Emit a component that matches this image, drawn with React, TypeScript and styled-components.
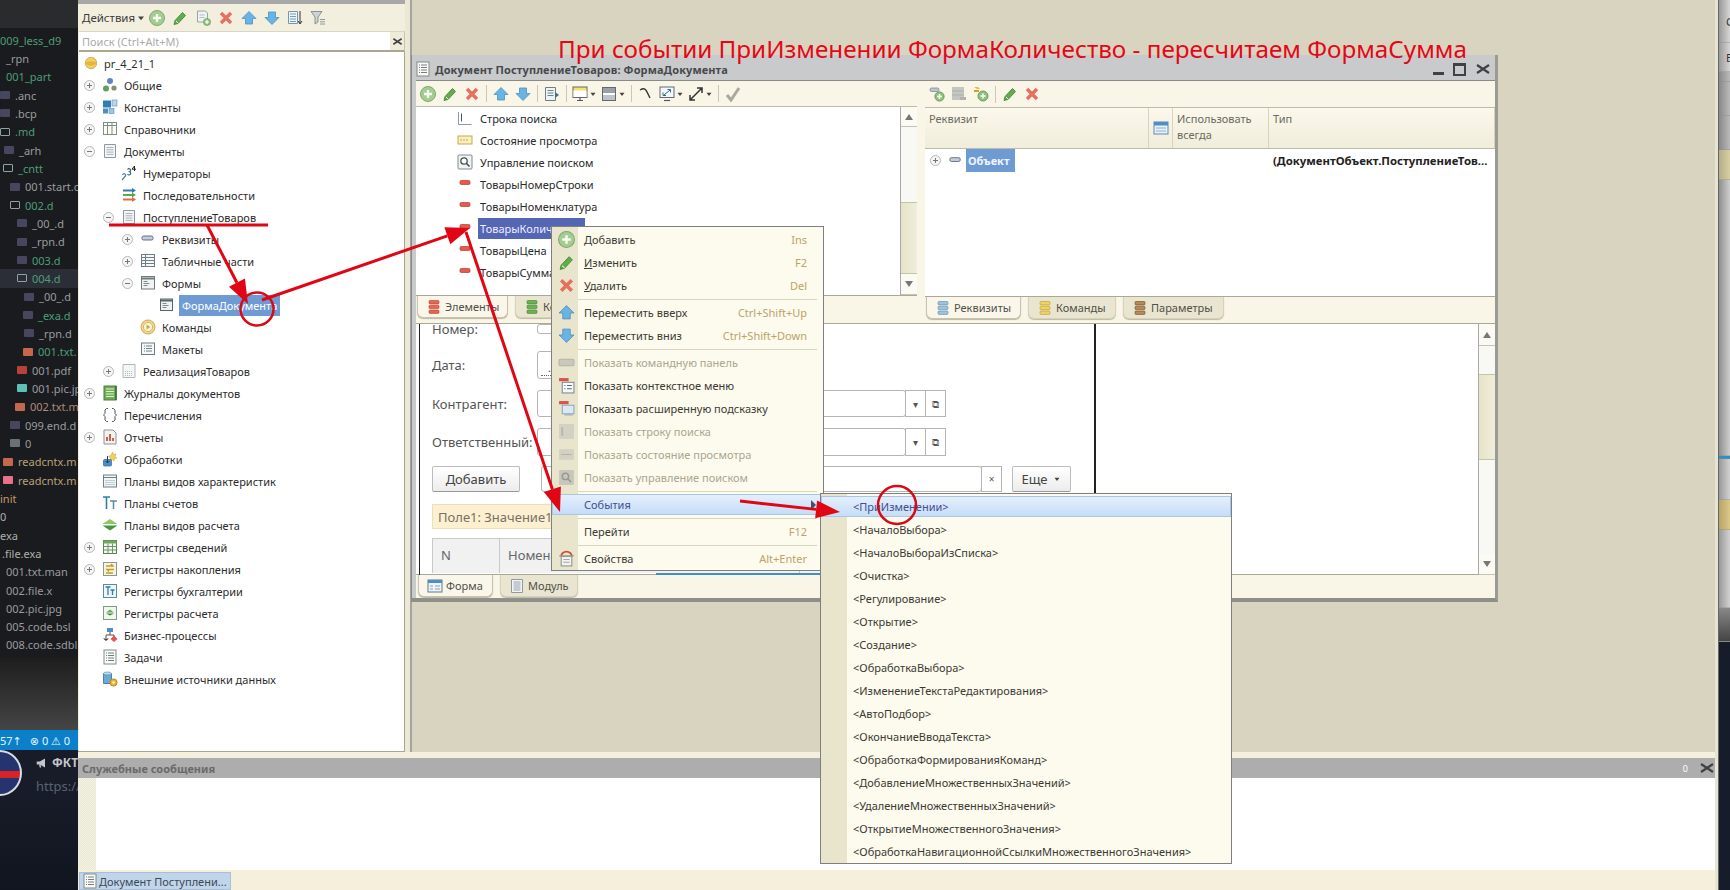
import React from "react";
import styled, { createGlobalStyle } from "styled-components";

const Global = createGlobalStyle`
  html, body { margin: 0; padding: 0; width: 1730px; height: 890px; overflow: hidden; background: #14181f; }
  * { box-sizing: border-box; }
  body { font-family: "Noto Sans", "DejaVu Sans", sans-serif; font-size: 11px; color: #2a2a2a; }
  #root { width: 1730px; height: 890px; }
`;

/* ---------- icons ---------- */
const Svg = styled.svg<{ $s?: number }>`
  width: ${(p) => p.$s ?? 16}px;
  height: ${(p) => p.$s ?? 16}px;
  flex: none;
  display: block;
`;

const bars = (c: string, d: string) => (
  <>
    <rect x="3" y="1.5" width="10" height="3.4" rx="1" fill={c} stroke={d} strokeWidth=".6" />
    <rect x="3" y="6.2" width="10" height="3.4" rx="1" fill={c} stroke={d} strokeWidth=".6" />
    <rect x="3" y="11" width="10" height="3.4" rx="1" fill={c} stroke={d} strokeWidth=".6" />
  </>
);

const page = (
  <path d="M2.5 1.5h11v13h-11z" fill="#f3f5f5" stroke="#8d9aa3" strokeWidth="1" />
);
const lines = (
  <path d="M4.5 4.5h7M4.5 6.8h7M4.5 9.1h7M4.5 11.4h7" stroke="#aab4bb" strokeWidth="1" />
);

const glyphs: Record<string, React.ReactNode> = {
  plus: (
    <>
      <circle cx="8" cy="8" r="7.5" fill="#a5cd92" stroke="#7fa873" />
      <path d="M8 4v8M4 8h8" stroke="#f5fbf0" strokeWidth="2.4" />
    </>
  ),
  pencil: (
    <>
      <path d="M10.5 2.5l3 3-7.5 8-4 1 1-4z" fill="#5fae4a" stroke="#3f7f33" strokeWidth=".8" />
      <path d="M4 11l2 2" stroke="#e8f4d8" strokeWidth="1" />
    </>
  ),
  cross: <path d="M3 3l10 10M13 3L3 13" stroke="#e76f60" strokeWidth="3.4" />,
  up: (
    <path
      d="M8 1.5L15 8.5H11.5V14H4.5V8.5H1z"
      fill="#69b4e4"
      stroke="#4f8fbf"
      strokeWidth=".8"
    />
  ),
  down: (
    <path
      d="M8 14.5L15 7.5H11.5V2H4.5V7.5H1z"
      fill="#69b4e4"
      stroke="#4f8fbf"
      strokeWidth=".8"
    />
  ),
  copy: (
    <>
      <path d="M2.5 1h8l2 2v9h-10z" fill="#eef2f2" stroke="#97a4ab" />
      <path d="M4.5 5h5M4.5 7.5h5" stroke="#b5bfc5" />
      <circle cx="12" cy="12" r="3.6" fill="#8fc17a" stroke="#6d9b5c" strokeWidth=".6" />
      <path d="M12 10v4M10 12h4" stroke="#fff" strokeWidth="1.2" />
    </>
  ),
  listdown: (
    <>
      <path d="M1.5 1.5h9v12h-9z" fill="#eef4f8" stroke="#7f95a3" />
      <path d="M3 4h6M3 6.5h6M3 9h6M3 11.5h6" stroke="#6f9dbf" />
      <path d="M13 1v12M11 11l2 3 2-3" stroke="#333" strokeWidth="1" fill="none" />
    </>
  ),
  filter: (
    <>
      <path d="M1 1.5h11L8 7v5l-3 2V7z" fill="#cfd4d2" stroke="#7d8a8d" strokeWidth=".9" />
      <path d="M10 9.5h5M10 11.8h5M10 14h5" stroke="#8f9a9c" />
    </>
  ),
  caret: <path d="M4 6h8l-4 5z" fill="#444" />,
  root: (
    <>
      <circle cx="8" cy="8" r="6.5" fill="#f3cf5e" stroke="#c9a94c" />
      <path d="M2 8a6 3 0 0012 0 6 2 0 00-12 0z" fill="#e4b63f" />
    </>
  ),
  common: (
    <>
      <circle cx="8" cy="4" r="3" fill="#5f83c4" />
      <circle cx="4" cy="11.5" r="3" fill="#5ea15b" />
      <circle cx="12" cy="11" r="2.6" fill="#8c8c72" />
    </>
  ),
  constants: (
    <>
      <rect x="1" y="1.5" width="8" height="7" fill="#2f7fb5" />
      <rect x="10" y="1" width="5" height="6" fill="#bcd6e8" stroke="#4f8fbf" strokeWidth=".6" />
      <rect x="1" y="9.5" width="5" height="5" fill="#4f8fbf" />
      <rect x="7" y="9.5" width="5" height="5" fill="#9fc4dd" stroke="#4f8fbf" strokeWidth=".6" />
    </>
  ),
  catalog: (
    <>
      <rect x="1.5" y="1.5" width="13" height="12" fill="#fdfcf3" stroke="#7f8d8d" />
      <path d="M1.5 4.5h13M5.5 1.5v12M10 1.5v12" stroke="#7f8d8d" />
    </>
  ),
  doc: (
    <>
      {page}
      {lines}
    </>
  ),
  docgrid: (
    <>
      <path d="M2 1.5h12v13H2z" fill="#f5f6f6" stroke="#b0b8bc" />
      <path d="M4 8.5h8M4 10.5h8M4 12.5h8" stroke="#b3bcc2" strokeDasharray="1 1" />
    </>
  ),
  numerator: (
    <>
      <path d="M1 15l3.5-4a1.6 1.6 0 10-3-1" fill="none" stroke="#4a7fa8" strokeWidth="1.2" />
      <path d="M6.5 4.5a1.6 1.6 0 112 2.2 1.7 1.7 0 11-2 2.4" fill="none" stroke="#2d5f85" strokeWidth="1.1" />
      <path d="M13.5 6V1L11 4.2h4" fill="none" stroke="#222" strokeWidth="1" />
    </>
  ),
  seq: (
    <>
      <path d="M2 3.5h10" stroke="#2d7cb5" strokeWidth="2" />
      <path d="M11 1l4 2.5-4 2.5z" fill="#2d7cb5" />
      <path d="M2 8h10" stroke="#5aa845" strokeWidth="2" />
      <path d="M11 5.5l4 2.5-4 2.5z" fill="#5aa845" />
      <path d="M2 12.5h10" stroke="#de6a4a" strokeWidth="2" />
      <path d="M11 10l4 2.5-4 2.5z" fill="#de6a4a" />
    </>
  ),
  attr: <rect x="2" y="5" width="11" height="4" rx="1.5" fill="#c6ccd8" stroke="#5f6f8c" />,
  attrRed: <rect x="3" y="4.5" width="10" height="4" rx="1.2" fill="#e9574d" stroke="#b53c34" strokeWidth=".7" />,
  table: (
    <>
      <rect x="1.5" y="1.5" width="13" height="12" fill="#f6f8f8" stroke="#6f7f88" />
      <path d="M1.5 4.5h13M1.5 7.5h13M1.5 10.5h13M5.5 1.5v12" stroke="#6f7f88" />
    </>
  ),
  forms: (
    <>
      <rect x="1.5" y="1.5" width="13" height="12.5" fill="#f3f4f2" stroke="#6f7a7c" />
      <path d="M1.5 3.5h13" stroke="#6f7a7c" strokeWidth="2" />
      <path d="M3.5 6.5h4M3.5 8.5h6M3.5 10.5h4" stroke="#7f8a8c" />
    </>
  ),
  form: (
    <>
      <rect x="1.5" y="2" width="12" height="11.5" fill="#eef1f2" stroke="#59656a" />
      <path d="M1.5 3.5h12" stroke="#59656a" strokeWidth="2" />
      <path d="M3.5 6.5h4M3.5 8.5h6M3.5 10.5h4" stroke="#7f8a8c" />
    </>
  ),
  cmd: (
    <>
      <circle cx="8" cy="8" r="7" fill="#f4d98a" stroke="#c7a955" />
      <circle cx="8" cy="8" r="4.6" fill="#fdf6d8" stroke="#d5b968" />
      <path d="M6.5 5.5l4 2.5-4 2.5z" fill="#d0a94a" />
    </>
  ),
  layout: (
    <>
      <rect x="1.5" y="2" width="13" height="11.5" fill="#f4f7f8" stroke="#6f8088" />
      <path d="M4 5h1M6 5h6M4 7.5h1M6 7.5h6M4 10h1M6 10h6" stroke="#6f8088" />
    </>
  ),
  journal: (
    <>
      <rect x="2" y="1" width="12" height="14" fill="#6fae55" stroke="#467f3c" />
      <path d="M4 4h8M4 6.5h8M4 9h8M4 11.5h8" stroke="#dff0cd" />
      <path d="M14 1v14" stroke="#2f6a2c" strokeWidth="1.4" />
    </>
  ),
  enum: (
    <path
      d="M6 1.5H4.5L3 3v3.5L1.5 8 3 9.5V13l1.5 1.5H6M10 1.5h1.5L13 3v3.5L14.5 8 13 9.5V13l-1.5 1.5H10"
      fill="none"
      stroke="#4a5560"
      strokeWidth="1"
    />
  ),
  report: (
    <>
      <path d="M2 1h9l3 3v11H2z" fill="#f4f2ee" stroke="#8d949a" />
      <path d="M5 12V8M8 12V5M11 12V9" stroke="#c0533f" strokeWidth="1.8" />
    </>
  ),
  proc: (
    <>
      <path d="M10.5 1l1 2.4 2.5-.4-1 2.4 1.9 1.6-2.5.5L12 10l-1.8-1.8L8 9.5l.4-2.7L6.5 5.2l2.5-.6z" fill="#f4d35c" stroke="#cda83c" strokeWidth=".6" />
      <rect x="1.5" y="8.5" width="8" height="6.5" rx="1" fill="#4e8fc9" stroke="#2f6a9f" strokeWidth=".7" />
      <path d="M5.5 5v7M3.5 10l2 2 2-2" stroke="#1e3f5e" fill="none" />
    </>
  ),
  pvh: (
    <>
      <rect x="1.5" y="2" width="13" height="12" fill="#f0f4f5" stroke="#6f8088" />
      <path d="M1.5 4.5h13" stroke="#6f8088" />
      <path d="M4 7v5M6 7v5M8 7v5M10 7v5M12 7v5" stroke="#96a9b3" strokeDasharray="1 1" />
    </>
  ),
  accounts: (
    <>
      <path d="M1 2h7M4.5 2v12" stroke="#2d7fa8" strokeWidth="1.6" />
      <path d="M8 6h7M11.5 6v8" stroke="#5a8a9f" strokeWidth="1.5" />
    </>
  ),
  calc: (
    <>
      <path d="M8 2l7.5 5H.5z" fill="#8fc66a" />
      <path d="M.5 8.5h15L8 13.5z" fill="#3f9a35" />
    </>
  ),
  regInfo: (
    <>
      <rect x="1.5" y="1.5" width="13" height="13" fill="#f2f6ee" stroke="#5f7f5a" />
      <path d="M1.5 1.5h13v3h-13z" fill="#6fa85f" />
      <path d="M1.5 7.5h13M1.5 11h13M6 4.5v10M10.5 4.5v10" stroke="#6f9466" />
    </>
  ),
  regAcc: (
    <>
      <rect x="1.5" y="1.5" width="13" height="13" fill="#f6f4e2" stroke="#8d9a8a" />
      <path d="M4 5h7l-2-2M12 8.5H5l2 2M4 12h7" stroke="#c99a1e" strokeWidth="1.4" fill="none" />
    </>
  ),
  regBuh: (
    <>
      <rect x="1.5" y="1.5" width="13" height="13" fill="#eef6f8" stroke="#5f8a9a" />
      <path d="M3.5 4h5M6 4v8M8.5 7h4M10.5 7v5" stroke="#2d7fa8" strokeWidth="1.3" />
    </>
  ),
  regCalc: (
    <>
      <rect x="1.5" y="1.5" width="13" height="13" fill="#f2f6ee" stroke="#7f9a8a" />
      <path d="M8 4.5l4 3H4z" fill="#6fa85f" />
      <path d="M4 8.5h8l-4 2z" fill="#2f8a35" />
    </>
  ),
  bp: (
    <>
      <rect x="5" y="1" width="6" height="4" fill="#4e8fc9" />
      <path d="M8 5v3M4 8h8M4 8v3M12 8v2" stroke="#555" />
      <path d="M1 11.5h6l-3 2.5z" fill="#444" />
      <path d="M12 8.5l3.5 3.5-3.5 3-3.5-3z" fill="#e0554d" />
    </>
  ),
  tasks: (
    <>
      <rect x="2" y="1" width="12" height="14" fill="#fbfbf4" stroke="#7f8d8d" />
      <path d="M4 4h1M6 4h6M4 6.5h1M6 6.5h6M4 9h1M6 9h6M4 11.5h1M6 11.5h6" stroke="#6f7f88" />
    </>
  ),
  ext: (
    <>
      <path d="M1.5 2.5h8v10h-8z" fill="#6da9d6" stroke="#4a80aa" />
      <ellipse cx="5.5" cy="2.5" rx="4" ry="1.5" fill="#bcd9ee" stroke="#4a80aa" strokeWidth=".6" />
      <circle cx="11.5" cy="11.5" r="3.6" fill="#e8b33f" stroke="#b98a25" />
      <circle cx="11.5" cy="11.5" r="1.2" fill="#fff4d0" />
    </>
  ),
  searchstr: (
    <>
      <path d="M1.5 2v12.5h13" fill="none" stroke="#8d9aa3" />
      <path d="M4.5 3.5v8" stroke="#4a5560" />
    </>
  ),
  state: (
    <>
      <rect x="1" y="4" width="14" height="8" fill="#fbefc0" stroke="#c5a94f" />
      <path d="M3 8h9" stroke="#c5a94f" strokeDasharray="2 1" />
    </>
  ),
  searchctl: (
    <>
      <rect x="1" y="1" width="14" height="14" rx="1" fill="#f2f4f4" stroke="#7f8d8d" />
      <circle cx="7" cy="7" r="3.2" fill="#fff" stroke="#47535c" strokeWidth="1.3" />
      <path d="M9.5 9.5l3 3" stroke="#47535c" strokeWidth="1.6" />
    </>
  ),
  run: (
    <>
      <path d="M1.5 1.5h10v13h-10z" fill="#eef3f4" stroke="#6f8088" />
      <path d="M3.5 4.5h6M3.5 7h6M3.5 9.5h6" stroke="#6f8088" />
      <path d="M11 6l4 3-4 3z" fill="#3f6d8d" />
    </>
  ),
  screenY: (
    <>
      <rect x="1" y="1" width="14" height="10.5" fill="#f7e26a" stroke="#667" />
      <rect x="1.5" y="4.5" width="13" height="6.5" fill="#fff" />
      <path d="M5 14.5h6M8 11.5v3" stroke="#556" strokeWidth="1.2" />
    </>
  ),
  panels: (
    <>
      <rect x="1.5" y="1.5" width="13" height="13" fill="#fff" stroke="#667" />
      <rect x="2" y="2" width="12" height="5" fill="#9aa2a8" />
      <rect x="2" y="9" width="12" height="5" fill="#bdc3c8" />
    </>
  ),
  bend: <path d="M2 4c5-3 6 0 7 2s2 4 3 6" fill="none" stroke="#333" strokeWidth="1.4" />,
  fit: (
    <>
      <rect x="1" y="1" width="14" height="10.5" fill="#f2f7fa" stroke="#667" />
      <path d="M5 9l6-5M8.5 3.5h3v3M4 6.5v3h3" stroke="#2d6a8f" fill="none" />
      <path d="M5 14.5h6" stroke="#556" strokeWidth="1.2" />
    </>
  ),
  diag: <path d="M2 14L14 2M9 2h5v5M2 9v5h5" fill="none" stroke="#333" strokeWidth="1.5" />,
  check: <path d="M2 9l4 5 8-12" fill="none" stroke="#a9a9a0" strokeWidth="3" />,
  addAttr: (
    <>
      <rect x="1" y="2" width="9" height="3.5" rx="1.5" fill="#bdc6c6" stroke="#6f8088" strokeWidth=".7" />
      <circle cx="10.5" cy="10.5" r="4.6" fill="#8fc17a" stroke="#6d9b5c" />
      <path d="M10.5 8v5M8 10.5h5" stroke="#fff" strokeWidth="1.5" />
    </>
  ),
  addGray: (
    <>
      <rect x="1" y="1" width="12" height="13" fill="#c4c6c2" />
      <path d="M1 5h12M1 9h12" stroke="#aeb0ac" />
      <rect x="9" y="11" width="6" height="3" fill="#b0b2ae" />
    </>
  ),
  addCmd: (
    <>
      <path d="M1 1h4l2 2H4z" fill="#e3b93c" />
      <path d="M1 5h5" stroke="#d49f24" strokeWidth="2" />
      <circle cx="10" cy="10" r="5" fill="#8fc17a" stroke="#6d9b5c" />
      <path d="M10 7.5v5M7.5 10h5" stroke="#fff" strokeWidth="1.5" />
    </>
  ),
  grayCmd: <rect x="1" y="5" width="14" height="6" rx="1" fill="#c9c8bb" stroke="#b5b4a6" />,
  ctxMenu: (
    <>
      <rect x="1" y="1" width="9" height="3" fill="#d9534a" />
      <rect x="4" y="5" width="11" height="10" fill="#f7f9fa" stroke="#7f8d8d" />
      <path d="M6 8h1M8.5 8h4.5M6 11h1M8.5 11h4.5" stroke="#4a6a8a" />
    </>
  ),
  hint: (
    <>
      <rect x="1" y="1" width="9" height="3" fill="#d9534a" />
      <path d="M4 5h11v8H4z" fill="#dbe9f3" stroke="#8fa7ba" />
      <path d="M6 14h8" stroke="#8fa7ba" />
    </>
  ),
  graySearch: (
    <>
      <rect x="1" y="1" width="14" height="14" fill="#d2d1c4" />
      <path d="M4 4v8" stroke="#b4b3a5" strokeWidth="1.5" />
    </>
  ),
  grayState: (
    <>
      <rect x="1" y="3" width="14" height="10" fill="#d2d1c4" />
      <path d="M3 8h10" stroke="#b4b3a5" />
    </>
  ),
  grayCtl: (
    <>
      <rect x="1" y="1" width="14" height="14" rx="1" fill="#c7c7bd" />
      <circle cx="7" cy="7" r="3" fill="none" stroke="#9a9a90" strokeWidth="1.4" />
      <path d="M9.3 9.3l3 3" stroke="#9a9a90" strokeWidth="1.5" />
    </>
  ),
  props: (
    <>
      <path d="M3 6a5 4.5 0 0110 0" fill="none" stroke="#c9503f" strokeWidth="1.6" />
      <path d="M1 5.5h14" stroke="#9a9a90" />
      <rect x="3" y="6" width="10" height="9" fill="#f3f3ec" stroke="#8d949a" />
      <path d="M5 9h6M5 11.5h6" stroke="#a0a8ae" />
    </>
  ),
  tabRed: bars("#e8664f", "#b5402e"),
  tabGreen: bars("#6cb24f", "#417f30"),
  tabBlue: bars("#9ec3e0", "#5f88a8"),
  tabYellow: bars("#f0d35c", "#b79a30"),
  tabBrown: bars("#b98a55", "#6a4a25"),
  tabForm: (
    <>
      <rect x="1" y="2" width="14" height="12" fill="#eef4f8" stroke="#5a7a92" />
      <rect x="1" y="2" width="14" height="3" fill="#4e8fc9" />
      <path d="M3 8h3M8 8h5M3 11h3M8 11h5" stroke="#8aa2b3" />
    </>
  ),
  tabModule: (
    <>
      {page}
      <path d="M4.5 4h7M4.5 6h7M4.5 8h7M4.5 10h7M4.5 12h7" stroke="#94a3ad" />
    </>
  ),
  msgCross: <path d="M2 4l12 8M14 4L2 12" stroke="#3f4245" strokeWidth="2.2" />,
  mega: (
    <>
      <path d="M1 6h4l7-4v12l-7-4H1z" fill="#c4c6c9" />
      <path d="M4 10l1 4h2l-1-4z" fill="#c4c6c9" />
    </>
  ),
  calendarHead: (
    <>
      <rect x="1" y="2" width="14" height="12" fill="#e6f1f8" stroke="#5f8ab0" />
      <rect x="1" y="2" width="14" height="3.5" fill="#4e8fc9" />
      <path d="M3 8h10M3 11h10" stroke="#8fb2cc" />
    </>
  ),
};

const Icon = ({ n, s }: { n: string; s?: number }) => (
  <Svg $s={s} viewBox="0 0 16 16">
    {glyphs[n]}
  </Svg>
);

/* ---------- page frame ---------- */
const Page = styled.div`
  position: relative;
  display: flex;
  width: 1730px;
  height: 890px;
  overflow: hidden;
`;

/* ---------- dark editor side panel ---------- */
const Side = styled.aside`
  width: 78px;
  flex: none;
  display: flex;
  flex-direction: column;
  background: #161a25;
  overflow: hidden;
`;
const SideHead = styled.div`
  height: 28px;
  flex: none;
  background: #2a2b2d;
`;
const SideList = styled.div`
  height: 629px;
  flex: none;
  padding-top: 3px;
  background: #191b1e;
  overflow: hidden;
`;
const SideRow = styled.div<{ $pad: number; $sel?: boolean; $color: string }>`
  display: flex;
  align-items: center;
  gap: 5px;
  height: 18.33px;
  padding-left: ${(p) => p.$pad}px;
  background: ${(p) => (p.$sel ? "#2b2e36" : "transparent")};
  color: ${(p) => p.$color};
  font-size: 11px;
  white-space: nowrap;
`;
const FolderSolid = styled.span<{ $c?: string }>`
  width: 10px;
  height: 8px;
  flex: none;
  border-radius: 1px;
  background: ${(p) => p.$c ?? "#46465f"};
`;
const FolderLine = styled.span`
  width: 10px;
  height: 8px;
  flex: none;
  border: 1.5px solid #8fa59a;
  border-radius: 1px;
`;
const SideFade = styled.div`
  height: 73px;
  flex: none;
  background: linear-gradient(#1d1d1d, #454545);
`;
const StatusBar = styled.div`
  height: 20px;
  flex: none;
  display: flex;
  align-items: center;
  gap: 8px;
  background: #0a80cb;
  color: #e6f3fb;
  font-size: 11px;
  white-space: nowrap;
`;
const Chat = styled.div`
  flex: 1;
  display: flex;
  gap: 14px;
  background: linear-gradient(#171c28 40px, #10151f);
`;
const Avatar = styled.div`
  width: 44px;
  height: 46px;
  margin-left: -22px;
  flex: none;
  border-radius: 50%;
  border: 2px solid #d8dce2;
  background: linear-gradient(#25346f 45%, #d8232a 45% 62%, #25346f 62%);
`;
const ChatBody = styled.div`
  display: flex;
  flex-direction: column;
  gap: 6px;
  padding-top: 4px;
  white-space: nowrap;
  font-size: 12px;
`;
const ChatTitle = styled.div`
  display: flex;
  align-items: center;
  gap: 4px;
  color: #c4c6c9;
  font-weight: 700;
`;
const ChatLink = styled.div`
  color: #5a6270;
  font-size: 13px;
`;

/* ---------- 1C application ---------- */
const AppWindow = styled.main`
  width: 1640px;
  flex: none;
  display: flex;
  flex-direction: column;
  background: #f4f0dd;
  border-right: 3px solid #e6e4d2;
`;
const Workspace = styled.div`
  height: 752px;
  flex: none;
  display: flex;
`;
const TreePanel = styled.section`
  width: 327px;
  flex: none;
  display: flex;
  flex-direction: column;
  background: #f3efdf;
  border-bottom: 1px solid #a9a88e;
`;
const PanelCap = styled.div`
  height: 4px;
  flex: none;
  background: #a8a8a8;
`;
const PanelBar = styled.div`
  height: 27px;
  flex: none;
  display: flex;
  align-items: center;
  gap: 7px;
  padding-left: 4px;
  color: #3b3b3b;
  font-size: 11.5px;
`;
const ActionMenu = styled.span`
  display: flex;
  align-items: center;
  margin-right: -5px;
`;
const SearchBox = styled.div`
  height: 21px;
  flex: none;
  margin-left: 1px;
  display: flex;
  align-items: center;
  justify-content: space-between;
  padding-left: 3px;
  background: #fff;
  border-top: 1px solid #d8d6c6;
  border-bottom: 2px solid #a9a88e;
  border-right: 1px solid #c8c6b2;
  color: #aaa;
  font-size: 11px;
`;
const SearchClear = styled.span`
  width: 14px;
  height: 18px;
  display: flex;
  align-items: center;
  justify-content: center;
  background: #efebd9;
`;
const Tree = styled.div`
  flex: 1;
  margin-left: 1px;
  background: #fff;
  border-right: 1px solid #a9a88e;
  overflow: hidden;
`;
const TreeRow = styled.div<{ $depth: number }>`
  display: flex;
  align-items: center;
  height: 22.03px;
  padding-left: ${(p) => 5 + p.$depth * 19}px;
  white-space: nowrap;
  color: #2c2c2c;
`;
const Expander = styled.span`
  position: relative;
  width: 11px;
  height: 11px;
  margin-right: 7px;
  flex: none;
  border-radius: 50%;
  border: 1px solid #b9b9b9;
  background: #f5f5f5;
  &::before {
    content: "";
    position: absolute;
    left: 2px;
    right: 2px;
    top: 4px;
    height: 1px;
    background: #777;
  }
`;
const ExpanderPlus = styled(Expander)`
  &::after {
    content: "";
    position: absolute;
    top: 2px;
    bottom: 2px;
    left: 4px;
    width: 1px;
    background: #777;
  }
`;
const NoExpander = styled.span`
  width: 11px;
  margin-right: 7px;
  flex: none;
`;
const TreeLabel = styled.span<{ $sel?: string }>`
  margin-left: ${(p) => (p.$sel ? 4 : 6)}px;
  padding: ${(p) => (p.$sel ? "3px 3px" : "0")};
  background: ${(p) => p.$sel ?? "transparent"};
  color: ${(p) => (p.$sel ? "#fff" : "inherit")};
`;
const Splitter = styled.div`
  width: 7px;
  flex: none;
  background: #ece8d6;
  border-right: 2px solid #a3a3a0;
`;
const Mdi = styled.div`
  position: relative;
  flex: 1;
  background: #d9d4bf;
`;
const Heading = styled.div`
  position: absolute;
  left: 146px;
  top: 33px;
  z-index: 2;
  color: #e4071c;
  font-size: 24.25px;
  line-height: 32px;
  white-space: nowrap;
`;

/* ---------- form designer window ---------- */
const FormWindow = styled.div`
  position: absolute;
  left: -1px;
  top: 55px;
  width: 1087px;
  height: 547px;
  display: flex;
  flex-direction: column;
  background: #c9cacb;
  border-right: 3px solid #9b9b95;
  border-left: 1px solid #8b8b86;
  border-bottom: 4px solid #8f8f8a;
`;
const TitleBar = styled.div`
  height: 25px;
  flex: none;
  display: flex;
  align-items: center;
  padding: 3px 4px 0 3px;
  gap: 4px;
  color: #46494d;
  font-weight: 700;
  letter-spacing: 0.1px;
  white-space: nowrap;
`;
const TitleText = styled.span`
  flex: 1;
`;
const WinBtn = styled.span`
  display: flex;
  align-items: center;
  gap: 9px;
`;
const WinMin = styled.span`
  width: 11px;
  height: 3px;
  margin-top: 9px;
  background: #3f4245;
`;
const WinMax = styled.span`
  width: 13px;
  height: 13px;
  border: 2px solid #3f4245;
  border-top-width: 3px;
`;
const FormBody = styled.div`
  flex: 1;
  margin-left: 4px;
  display: flex;
  flex-direction: column;
  border-top: 1px solid #8b8b86;
  background: #f9f6e8;
  min-height: 0;
`;
const Upper = styled.div`
  height: 243px;
  flex: none;
  display: flex;
  gap: 8px;
  border-bottom: 1px solid #aaa999;
`;
const Pane = styled.div<{ $w: number }>`
  width: ${(p) => p.$w}px;
  flex: none;
  display: flex;
  flex-direction: column;
`;
const ToolRow = styled.div`
  height: 27px;
  flex: none;
  display: flex;
  align-items: center;
  gap: 6px;
  padding-left: 4px;
  border-bottom: 1px solid #bdbcaa;
`;
const ToolRowTight = styled(ToolRow)`
  height: 26px;
`;
const ToolSep = styled.span`
  width: 1px;
  height: 17px;
  background: #c9c8b6;
`;
const Drop = styled.span`
  display: flex;
  align-items: center;
  margin-left: -1px;
  margin-right: -2px;
`;
const TreeBox = styled.div`
  height: 189px;
  flex: none;
  display: flex;
  background: #fff;
  border-bottom: 1px solid #aaa999;
  overflow: hidden;
`;
const ElemList = styled.div`
  flex: 1;
  min-width: 0;
`;
const ElemRow = styled.div`
  display: flex;
  align-items: center;
  height: 22px;
  padding-left: 41px;
  gap: 5px;
  white-space: nowrap;
`;
const ElemText = styled.span<{ $sel?: boolean }>`
  padding: 3px 2px;
  width: ${(p) => (p.$sel ? "107px" : "auto")};
  background: ${(p) => (p.$sel ? "#5566b5" : "transparent")};
  color: ${(p) => (p.$sel ? "#eef" : "inherit")};
  overflow: hidden;
`;
const Scroll = styled.div<{ $w: number }>`
  width: ${(p) => p.$w}px;
  flex: none;
  display: flex;
  flex-direction: column;
  border-left: 1px solid #aaa;
  background: #f8f8f4;
`;
const ScrollBtn = styled.div<{ $h: number }>`
  height: ${(p) => p.$h}px;
  flex: none;
  display: flex;
  align-items: center;
  justify-content: center;
  background: #fbfaf3;
  border-bottom: 1px solid #c5c4b4;
`;
const ScrollArrow = styled.span<{ $down?: boolean }>`
  width: 0;
  height: 0;
  border-left: 4px solid transparent;
  border-right: 4px solid transparent;
  border-top: ${(p) => (p.$down ? "6px solid #777" : "0")};
  border-bottom: ${(p) => (p.$down ? "0" : "6px solid #777")};
`;
const ScrollTrack = styled.div<{ $h: number }>`
  height: ${(p) => p.$h}px;
  flex: none;
`;
const ScrollThumb = styled.div<{ $h: number }>`
  height: ${(p) => p.$h}px;
  flex: none;
  background: linear-gradient(90deg, #e6e3c9, #f0eeda);
  border-top: 1px solid #c5c4a4;
  border-bottom: 1px solid #c5c4a4;
`;
const Tabs = styled.div`
  flex: 1;
  display: flex;
  gap: 7px;
  padding-left: 1px;
`;
const Tab = styled.div<{ $active?: boolean; $w: number }>`
  width: ${(p) => p.$w}px;
  height: 22px;
  display: flex;
  align-items: center;
  gap: 3px;
  padding-left: 8px;
  border-radius: 0 0 6px 6px;
  background: ${(p) => (p.$active ? "#faf7ea" : "#e9e5d0")};
  border: 1px solid ${(p) => (p.$active ? "#c6c3ae" : "#d6d2bb")};
  border-top: 0;
  box-shadow: 0 1px 1px #bdb9a3;
  color: #50504a;
  white-space: nowrap;
`;
const Grid = styled.div`
  height: 41px;
  flex: none;
  display: flex;
  color: #6a6a60;
  background: linear-gradient(#fbf8ec, #f1eddb);
  border-bottom: 1px solid #bdbcaa;
`;
const GridCol = styled.div<{ $w?: number; $center?: boolean }>`
  width: ${(p) => (p.$w ? `${p.$w}px` : "auto")};
  flex: ${(p) => (p.$w ? "none" : "1")};
  display: flex;
  align-items: ${(p) => (p.$center ? "center" : "flex-start")};
  justify-content: ${(p) => (p.$center ? "center" : "flex-start")};
  padding: ${(p) => (p.$center ? "0" : "3px 4px")};
  line-height: 16px;
  border-right: 1px solid #d6d3bf;
`;
const GridCell = styled.span`
  display: block;
`;
const GridBody = styled.div`
  height: 148px;
  flex: none;
  background: #fff;
  border-bottom: 1px solid #aaa999;
`;
const GridRow = styled.div`
  display: flex;
  align-items: center;
  height: 23px;
  padding-left: 5px;
`;
const GridName = styled.span`
  width: 49px;
  height: 23px;
  margin-left: 3px;
  padding-left: 2px;
  line-height: 23px;
  background: #6f9bd4;
  color: #eef4ff;
  font-weight: 700;
`;
const GridType = styled.span`
  margin-left: 258px;
  font-size: 11.4px;
  font-weight: 700;
  color: #222;
  white-space: nowrap;
`;

/* ---------- form preview ---------- */
const Preview = styled.div`
  height: 251px;
  flex: none;
  display: flex;
  background: #fff;
  border-bottom: 1px solid #aaa999;
`;
const PreviewForm = styled.div`
  width: 677px;
  height: 251px;
  flex: none;
  display: flex;
  flex-direction: column;
  padding-left: 12px;
  overflow: hidden;
  margin-left: 3px;
  border-left: 1px solid #222;
  border-right: 2px solid #222;
`;
const PvRow = styled.div<{ $h: number; $mt: number }>`
  height: ${(p) => p.$h}px;
  margin-top: ${(p) => p.$mt}px;
  flex: none;
  display: flex;
  align-items: center;
  color: #555;
  font-size: 13px;
`;
const PvLabel = styled.span`
  width: 105px;
  flex: none;
`;
const PvField = styled.span<{ $w: number }>`
  width: ${(p) => p.$w}px;
  height: 100%;
  flex: none;
  border: 1px solid #b5b5b5;
  border-radius: 3px;
  background: #fff;
`;
const PvSearch = styled(PvField)`
  margin-left: 21px;
`;
const DateField = styled(PvField)`
  display: flex;
  align-items: flex-end;
  padding: 0 0 2px 3px;
  line-height: 14px;
`;
const DateMask = styled.span`
  width: 100px;
  padding-left: 7px;
  border-bottom: 1px dotted #666;
  color: #444;
  font-size: 11px;
`;
const PvSide = styled.span`
  width: 21px;
  height: 100%;
  flex: none;
  display: flex;
  align-items: center;
  justify-content: center;
  margin-left: -1px;
  border: 1px solid #b5b5b5;
  color: #555;
  font-size: 10px;
`;
const PvButton = styled.span<{ $w: number }>`
  width: ${(p) => p.$w}px;
  height: 100%;
  flex: none;
  display: flex;
  align-items: center;
  justify-content: center;
  gap: 4px;
  border: 1px solid #bcbcbc;
  border-bottom-color: #999;
  border-radius: 2px;
  background: linear-gradient(#fff, #ececec);
  color: #444;
`;
const PvMore = styled(PvButton)`
  margin-left: 10px;
`;
const PvBand = styled.div`
  width: 640px;
  height: 100%;
  display: flex;
  align-items: center;
  padding-left: 5px;
  background: #fcf0d0;
  border: 1px solid #eadfb8;
  color: #777063;
`;
const PvHead = styled.div`
  width: 640px;
  height: 35px;
  display: flex;
  background: #f1f1f1;
  border-top: 1px solid #c8c8c8;
  border-left: 1px solid #c8c8c8;
  color: #666;
  line-height: 33px;
`;
const PvCol = styled.span<{ $w: number }>`
  width: ${(p) => p.$w}px;
  padding-left: 8px;
  border-right: 1px solid #c8c8c8;
`;
const PvBlue = styled.div`
  height: 3px;
  margin-left: 224px;
  background: #3f8fc4;
`;
const PreviewRest = styled.div`
  flex: 1;
  background: #fff;
`;
const BottomTabs = styled.div`
  height: 22px;
  flex: none;
  display: flex;
  gap: 7px;
  padding-left: 2px;
`;

/* ---------- lower panels ---------- */
const Gap = styled.div`
  height: 6px;
  flex: none;
`;
const MsgTitle = styled.div`
  height: 20px;
  flex: none;
  display: flex;
  align-items: center;
  justify-content: space-between;
  padding: 0 0 0 4px;
  background: #adadad;
  color: #6a6a6a;
  font-weight: 700;
`;
const MsgTools = styled.span`
  display: flex;
  align-items: center;
  gap: 11px;
  color: #fff;
  font-size: 9px;
  font-weight: 400;
`;
const MsgBody = styled.div`
  height: 92px;
  flex: none;
  display: flex;
  background: #fff;
`;
const MsgGutter = styled.div`
  width: 18px;
  flex: none;
  background: repeating-conic-gradient(#e8e5d0 0 25%, #f6f4e6 0 50%) 0 0 / 2px 2px;
`;
const TaskBar = styled.div`
  flex: 1;
  padding: 2px 0 0 1px;
  background: #f5efdc;
`;
const TaskBtn = styled.div`
  width: 152px;
  height: 18px;
  display: flex;
  align-items: center;
  gap: 1px;
  padding-left: 2px;
  background: #c0d4ea;
  border: 1px solid #a8bfd8;
  color: #3c4a58;
  font-size: 11px;
  white-space: nowrap;
  overflow: hidden;
`;

/* ---------- right strip (window behind) ---------- */
const Strip = styled.aside`
  flex: 1;
  display: flex;
  flex-direction: column;
  border-left: 1px solid #666;
  overflow: hidden;
`;
const StripPart = styled.div<{ $h: number; $bg: string }>`
  height: ${(p) => p.$h}px;
  flex: none;
  background: ${(p) => p.$bg};
  border-bottom: 1px solid #8a8a8a66;
  color: #333;
  font-size: 11px;
  line-height: ${(p) => p.$h}px;
  padding-left: 7px;
`;
const StripFill = styled.div`
  flex: 1;
  background: #171c2b;
`;

/* ---------- context menus ---------- */
const Menu = styled.div<{ $l: number; $t: number; $w: number }>`
  position: absolute;
  left: ${(p) => p.$l}px;
  top: ${(p) => p.$t}px;
  width: ${(p) => p.$w}px;
  z-index: 5;
  padding: 1px 0 0;
  background: linear-gradient(90deg, #e9e5cc 0 26px, #fdfaee 26px);
  border: 1px solid #7f7f7f;
`;
const MenuRow = styled.div<{ $off?: boolean; $hot?: boolean }>`
  height: ${(p) => (p.$hot ? 21 : 23)}px;
  margin: ${(p) => (p.$hot ? "1px 0" : "0")};
  display: flex;
  align-items: center;
  padding: 0 16px 0 5px;
  white-space: nowrap;
  color: ${(p) => (p.$hot ? "#414f92" : p.$off ? "#aaa68f" : "#3b3a33")};
  background: ${(p) => (p.$hot ? "linear-gradient(#e6f0fc, #c4dcf7)" : "transparent")};
  outline: ${(p) => (p.$hot ? "1px solid #a9c6e8" : "none")};
  outline-offset: -1px;
`;
const MenuIcon = styled.span`
  width: 18px;
  height: 18px;
  margin-right: 9px;
  flex: none;
  display: flex;
  align-items: center;
  justify-content: center;
`;
const MenuText = styled.span`
  flex: 1;
`;
const Shortcut = styled.span`
  color: #b9a567;
`;
const MenuSep = styled.div`
  height: 4px;
  margin: 0 6px 0 26px;
  background: linear-gradient(#d8d5c2, #d8d5c2) center / 100% 1px no-repeat;
`;
const SubArrow = styled.span`
  width: 0;
  height: 0;
  margin-right: -9px;
  border-top: 5px solid transparent;
  border-bottom: 5px solid transparent;
  border-left: 5px solid #3d5173;
`;
const Marks = styled.svg`
  position: absolute;
  left: 0;
  top: 0;
  width: 1730px;
  height: 890px;
  z-index: 9;
  pointer-events: none;
`;

/* ---------- data ---------- */
type Ex = [string, number, string, string, boolean?];
const G = "#4f9d78";
const N = "#9a9c9f";
const explorer: Ex[] = [
  ["009_less_d9", 0, "", G],
  ["_rpn", 6, "", N],
  ["001_part", 6, "", G],
  [".anc", 0, "s", N],
  [".bcp", 0, "s", N],
  [".md", 0, "l", G],
  ["_arh", 4, "s", N],
  ["_cntt", 3, "l", G],
  ["001.start.c", 10, "s", N],
  ["002.d", 10, "l", G],
  ["_00_.d", 17, "s", N],
  ["_rpn.d", 17, "s", N],
  ["003.d", 17, "s", G],
  ["004.d", 17, "l", G, true],
  ["_00_.d", 24, "s", N],
  ["_exa.d", 23, "s", G],
  ["_rpn.d", 24, "s", N],
  ["001.txt.", 23, "r", G],
  ["001.pdf", 17, "p", N],
  ["001.pic.jpg", 17, "t", N],
  ["002.txt.m", 15, "r", "#b08a7a"],
  ["099.end.d", 10, "s", N],
  ["0", 10, "g", N],
  ["readcntx.m", 3, "r", "#b9a27a"],
  ["readcntx.m", 3, "k", "#b9a27a"],
  ["init", 0, "", "#c59a68"],
  ["0", 0, "", "#b0b0a8"],
  ["exa", 0, "", "#b0b0a8"],
  [".file.exa", 2, "", "#b0b0a8"],
  ["001.txt.man", 6, "", N],
  ["002.file.x", 6, "", N],
  ["002.pic.jpg", 6, "", N],
  ["005.code.bsl", 6, "", N],
  ["008.code.sdbl", 6, "", N],
];

type T = [number, "+" | "-" | "", string, string, string?];
const tree: T[] = [
  [0, "+", "common", "Общие"],
  [0, "+", "constants", "Константы"],
  [0, "+", "catalog", "Справочники"],
  [0, "-", "doc", "Документы"],
  [1, "", "numerator", "Нумераторы"],
  [1, "", "seq", "Последовательности"],
  [1, "-", "doc", "ПоступлениеТоваров"],
  [2, "+", "attr", "Реквизиты"],
  [2, "+", "table", "Табличные части"],
  [2, "-", "forms", "Формы"],
  [3, "", "form", "ФормаДокумента", "#6f9bd4"],
  [2, "", "cmd", "Команды"],
  [2, "", "layout", "Макеты"],
  [1, "+", "docgrid", "РеализацияТоваров"],
  [0, "+", "journal", "Журналы документов"],
  [0, "", "enum", "Перечисления"],
  [0, "+", "report", "Отчеты"],
  [0, "", "proc", "Обработки"],
  [0, "", "pvh", "Планы видов характеристик"],
  [0, "", "accounts", "Планы счетов"],
  [0, "", "calc", "Планы видов расчета"],
  [0, "+", "regInfo", "Регистры сведений"],
  [0, "+", "regAcc", "Регистры накопления"],
  [0, "", "regBuh", "Регистры бухгалтерии"],
  [0, "", "regCalc", "Регистры расчета"],
  [0, "", "bp", "Бизнес-процессы"],
  [0, "", "tasks", "Задачи"],
  [0, "", "ext", "Внешние источники данных"],
];

const elements: [string, string][] = [
  ["searchstr", "Строка поиска"],
  ["state", "Состояние просмотра"],
  ["searchctl", "Управление поиском"],
  ["attrRed", "ТоварыНомерСтроки"],
  ["attrRed", "ТоварыНоменклатура"],
  ["attrRed", "ТоварыКоличество"],
  ["attrRed", "ТоварыЦена"],
  ["attrRed", "ТоварыСумма"],
];

type M =
  | "sep"
  | { i?: string; t: string; u?: boolean; k?: string; off?: boolean; hot?: boolean; sub?: boolean };
const menu: M[] = [
  { i: "plus", t: "Добавить", u: true, k: "Ins" },
  { i: "pencil", t: "Изменить", u: true, k: "F2" },
  { i: "cross", t: "Удалить", u: true, k: "Del" },
  "sep",
  { i: "up", t: "Переместить вверх", k: "Ctrl+Shift+Up" },
  { i: "down", t: "Переместить вниз", k: "Ctrl+Shift+Down" },
  "sep",
  { i: "grayCmd", t: "Показать командную панель", off: true },
  { i: "ctxMenu", t: "Показать контекстное меню" },
  { i: "hint", t: "Показать расширенную подсказку" },
  { i: "graySearch", t: "Показать строку поиска", off: true },
  { i: "grayState", t: "Показать состояние просмотра", off: true },
  { i: "grayCtl", t: "Показать управление поиском", off: true },
  "sep",
  { t: "События", hot: true, sub: true },
  "sep",
  { t: "Перейти", k: "F12" },
  "sep",
  { i: "props", t: "Свойства", k: "Alt+Enter" },
];

const events = [
  "ПриИзменении",
  "НачалоВыбора",
  "НачалоВыбораИзСписка",
  "Очистка",
  "Регулирование",
  "Открытие",
  "Создание",
  "ОбработкаВыбора",
  "ИзменениеТекстаРедактирования",
  "АвтоПодбор",
  "ОкончаниеВводаТекста",
  "ОбработкаФормированияКоманд",
  "ДобавлениеМножественныхЗначений",
  "УдалениеМножественныхЗначений",
  "ОткрытиеМножественногоЗначения",
  "ОбработкаНавигационнойСсылкиМножественногоЗначения",
];

const strip: [number, string, string?][] = [
  [43, "linear-gradient(90deg,#999,#d6d6d6)", "С"],
  [29, "linear-gradient(90deg,#999,#d6d6d6)", "Е"],
  [10, "linear-gradient(90deg,#888,#bbb)"],
  [34, "linear-gradient(90deg,#888,#bbb)"],
  [34, "linear-gradient(90deg,#888,#bbb)"],
  [30, "linear-gradient(90deg,#b5ad88,#d8cfa5)"],
  [276, "linear-gradient(90deg,#8f8f8f,#cfcfcf)"],
  [3, "#2f90bd"],
  [41, "linear-gradient(90deg,#999,#d2d2d2)"],
  [30, "linear-gradient(90deg,#b7a468,#dcc987)"],
  [78, "linear-gradient(90deg,#999,#d2d2d2)"],
  [34, "linear-gradient(#888,#444)"],
];

const RED = "#e00613";
const Arrow = ({ x1, y1, x2, y2 }: { x1: number; y1: number; x2: number; y2: number }) => {
  const a = Math.atan2(y2 - y1, x2 - x1);
  const L = 24;
  const W = 9;
  const bx = x2 - L * Math.cos(a);
  const by = y2 - L * Math.sin(a);
  const nx = -Math.sin(a) * W;
  const ny = Math.cos(a) * W;
  return (
    <>
      <line x1={x1} y1={y1} x2={bx} y2={by} stroke={RED} strokeWidth="3" />
      <polygon points={`${x2},${y2} ${bx + nx},${by + ny} ${bx - nx},${by - ny}`} fill={RED} />
    </>
  );
};

const explorerIcon = (k: string) => {
  if (k === "s") return <FolderSolid />;
  if (k === "l") return <FolderLine />;
  if (k === "r") return <FolderSolid $c="#c4674f" />;
  if (k === "p") return <FolderSolid $c="#b8413a" />;
  if (k === "t") return <FolderSolid $c="#5fc0b8" />;
  if (k === "g") return <FolderSolid $c="#6a7178" />;
  if (k === "k") return <FolderSolid $c="#e8708a" />;
  return null;
};

const Sb = ({ w, a, t, b, c, d }: { w: number; a: number; t: number; b: number; c: number; d: number }) => (
  <Scroll $w={w}>
    <ScrollBtn $h={a}>
      <ScrollArrow />
    </ScrollBtn>
    <ScrollTrack $h={t} />
    <ScrollThumb $h={b} />
    <ScrollTrack $h={c} />
    <ScrollBtn $h={d}>
      <ScrollArrow $down />
    </ScrollBtn>
  </Scroll>
);

export default function App() {
  return (
    <Page>
      <Global />
      <Side>
        <SideHead />
        <SideList>
          {explorer.map(([t, pad, k, c, sel], i) => (
            <SideRow key={i} $pad={pad} $color={c} $sel={sel}>
              {explorerIcon(k)}
              {t}
            </SideRow>
          ))}
        </SideList>
        <SideFade />
        <StatusBar>
          <span>57↑</span>
          <span>⊗ 0 ⚠ 0</span>
        </StatusBar>
        <Chat>
          <Avatar />
          <ChatBody>
            <ChatTitle>
              <Icon n="mega" s={12} />
              ФКТ
            </ChatTitle>
            <ChatLink>https://</ChatLink>
          </ChatBody>
        </Chat>
      </Side>

      <AppWindow>
        <Workspace>
          <TreePanel>
            <PanelCap />
            <PanelBar>
              <ActionMenu>
                Действия
                <Icon n="caret" s={12} />
              </ActionMenu>
              <Icon n="plus" />
              <Icon n="pencil" />
              <Icon n="copy" />
              <Icon n="cross" />
              <Icon n="up" />
              <Icon n="down" />
              <Icon n="listdown" />
              <Icon n="filter" />
            </PanelBar>
            <SearchBox>
              Поиск (Ctrl+Alt+M)
              <SearchClear>
                <Icon n="msgCross" s={11} />
              </SearchClear>
            </SearchBox>
            <Tree>
              <TreeRow $depth={0}>
                <Icon n="root" s={14} />
                <TreeLabel>pr_4_21_1</TreeLabel>
              </TreeRow>
              {tree.map(([d, e, ic, t, sel], i) => (
                <TreeRow key={i} $depth={d}>
                  {e === "+" ? <ExpanderPlus /> : e === "-" ? <Expander /> : <NoExpander />}
                  <Icon n={ic} />
                  <TreeLabel $sel={sel}>{t}</TreeLabel>
                </TreeRow>
              ))}
            </Tree>
          </TreePanel>
          <Splitter />
          <Mdi>
            <Heading>При событии ПриИзменении ФормаКоличество - пересчитаем ФормаСумма</Heading>
            <FormWindow>
              <TitleBar>
                <Icon n="tasks" />
                <TitleText>Документ ПоступлениеТоваров: ФормаДокумента</TitleText>
                <WinBtn>
                  <WinMin />
                  <WinMax />
                  <Icon n="msgCross" />
                </WinBtn>
              </TitleBar>
              <FormBody>
                <Upper>
                  <Pane $w={501}>
                    <ToolRowTight>
                      <Icon n="plus" />
                      <Icon n="pencil" />
                      <Icon n="cross" />
                      <ToolSep />
                      <Icon n="up" />
                      <Icon n="down" />
                      <ToolSep />
                      <Icon n="run" />
                      <ToolSep />
                      <Drop>
                        <Icon n="screenY" />
                        <Icon n="caret" s={10} />
                      </Drop>
                      <Drop>
                        <Icon n="panels" />
                        <Icon n="caret" s={10} />
                      </Drop>
                      <ToolSep />
                      <Icon n="bend" />
                      <Drop>
                        <Icon n="fit" />
                        <Icon n="caret" s={10} />
                      </Drop>
                      <Drop>
                        <Icon n="diag" />
                        <Icon n="caret" s={10} />
                      </Drop>
                      <ToolSep />
                      <Icon n="check" />
                    </ToolRowTight>
                    <TreeBox>
                      <ElemList>
                        {elements.map(([ic, t]) => (
                          <ElemRow key={t}>
                            <Icon n={ic} />
                            <ElemText $sel={t === "ТоварыКоличество"}>{t}</ElemText>
                          </ElemRow>
                        ))}
                      </ElemList>
                      <Sb w={17} a={20} t={75} b={72} c={0} d={21} />
                    </TreeBox>
                    <Tabs>
                      <Tab $active $w={91}>
                        <Icon n="tabRed" />
                        Элементы
                      </Tab>
                      <Tab $w={91}>
                        <Icon n="tabGreen" />
                        Командный интерфейс
                      </Tab>
                    </Tabs>
                  </Pane>
                  <Pane $w={570}>
                    <ToolRow>
                      <Icon n="addAttr" />
                      <Icon n="addGray" />
                      <Icon n="addCmd" />
                      <ToolSep />
                      <Icon n="pencil" />
                      <Icon n="cross" />
                    </ToolRow>
                    <Grid>
                      <GridCol $w={224}>Реквизит</GridCol>
                      <GridCol $w={24} $center>
                        <Icon n="calendarHead" />
                      </GridCol>
                      <GridCol $w={96}>
                        <GridCell>
                          Использовать
                          <br />
                          всегда
                        </GridCell>
                      </GridCol>
                      <GridCol>Тип</GridCol>
                    </Grid>
                    <GridBody>
                      <GridRow>
                        <ExpanderPlus />
                        <Icon n="attr" s={15} />
                        <GridName>Объект</GridName>
                        <GridType>(ДокументОбъект.ПоступлениеТов...</GridType>
                      </GridRow>
                    </GridBody>
                    <Tabs>
                      <Tab $active $w={95}>
                        <Icon n="tabBlue" />
                        Реквизиты
                      </Tab>
                      <Tab $w={88}>
                        <Icon n="tabYellow" />
                        Команды
                      </Tab>
                      <Tab $w={101}>
                        <Icon n="tabBrown" />
                        Параметры
                      </Tab>
                    </Tabs>
                  </Pane>
                </Upper>
                <Preview>
                  <PreviewForm>
                    <PvRow $h={10} $mt={0}>
                      <PvLabel>Номер:</PvLabel>
                      <PvField $w={60} />
                    </PvRow>
                    <PvRow $h={28} $mt={17}>
                      <PvLabel>Дата:</PvLabel>
                      <DateField $w={120}>
                        <DateMask>.</DateMask>
                      </DateField>
                    </PvRow>
                    <PvRow $h={27} $mt={11}>
                      <PvLabel>Контрагент:</PvLabel>
                      <PvField $w={369} />
                      <PvSide>▾</PvSide>
                      <PvSide>⧉</PvSide>
                    </PvRow>
                    <PvRow $h={28} $mt={11}>
                      <PvLabel>Ответственный:</PvLabel>
                      <PvField $w={369} />
                      <PvSide>▾</PvSide>
                      <PvSide>⧉</PvSide>
                    </PvRow>
                    <PvRow $h={26} $mt={10}>
                      <PvButton $w={88}>Добавить</PvButton>
                      <PvSearch $w={441} />
                      <PvSide>×</PvSide>
                      <PvMore $w={59}>
                        Еще
                        <Icon n="caret" s={10} />
                      </PvMore>
                    </PvRow>
                    <PvRow $h={25} $mt={12}>
                      <PvBand>Поле1: Значение1</PvBand>
                    </PvRow>
                    <PvRow $h={35} $mt={9}>
                      <PvHead>
                        <PvCol $w={67}>N</PvCol>
                        <PvCol $w={300}>Номенклатура</PvCol>
                      </PvHead>
                    </PvRow>
                    <PvBlue />
                  </PreviewForm>
                  <PreviewRest />
                  <Sb w={17} a={22} t={28} b={86} c={94} d={21} />
                </Preview>
                <BottomTabs>
                  <Tab $active $w={75}>
                    <Icon n="tabForm" />
                    Форма
                  </Tab>
                  <Tab $w={78}>
                    <Icon n="tabModule" />
                    Модуль
                  </Tab>
                </BottomTabs>
              </FormBody>
            </FormWindow>
          </Mdi>
        </Workspace>
        <Gap />
        <MsgTitle>
          Служебные сообщения
          <MsgTools>
            0
            <Icon n="msgCross" />
          </MsgTools>
        </MsgTitle>
        <MsgBody>
          <MsgGutter />
        </MsgBody>
        <TaskBar>
          <TaskBtn>
            <Icon n="tasks" />
            Документ Поступлени...
          </TaskBtn>
        </TaskBar>
      </AppWindow>

      <Strip>
        {strip.map(([h, bg, t], i) => (
          <StripPart key={i} $h={h} $bg={bg}>
            {t}
          </StripPart>
        ))}
        <StripFill />
      </Strip>

      <Menu $l={551} $t={226} $w={273}>
        {menu.map((m, i) =>
          m === "sep" ? (
            <MenuSep key={i} />
          ) : (
            <MenuRow key={i} $off={m.off} $hot={m.hot}>
              <MenuIcon>{m.i ? <Icon n={m.i} s={17} /> : null}</MenuIcon>
              <MenuText>
                {m.u ? (
                  <>
                    <u>{m.t[0]}</u>
                    {m.t.slice(1)}
                  </>
                ) : (
                  m.t
                )}
              </MenuText>
              {m.k ? <Shortcut>{m.k}</Shortcut> : null}
              {m.sub ? <SubArrow /> : null}
            </MenuRow>
          )
        )}
      </Menu>
      <Menu $l={820} $t={493} $w={412}>
        {events.map((e, i) => (
          <MenuRow key={e} $hot={i === 0}>
            <MenuIcon />
            <MenuText>{`<${e}>`}</MenuText>
          </MenuRow>
        ))}
      </Menu>

      <Marks viewBox="0 0 1730 890">
        <line x1="109" y1="225" x2="268" y2="225" stroke={RED} strokeWidth="3" />
        <Arrow x1={207} y1={225} x2={248} y2={304} />
        <circle cx="257" cy="309" r="16.5" fill="none" stroke="#d90a16" strokeWidth="2.5" />
        <Arrow x1={262} y1={300} x2={470} y2={228} />
        <Arrow x1={466} y1={232} x2={560} y2={512} />
        <Arrow x1={740} y1={501} x2={840} y2={512} />
        <circle cx="897" cy="505" r="19" fill="none" stroke="#d90a16" strokeWidth="2.5" />
      </Marks>
    </Page>
  );
}
